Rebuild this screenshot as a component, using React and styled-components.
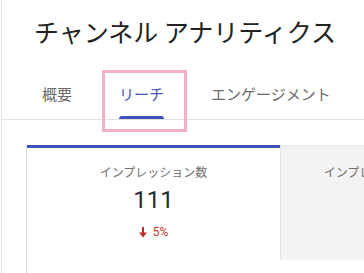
import styled, { createGlobalStyle } from 'styled-components';

const GlobalStyle = createGlobalStyle`
  html, body {
    margin: 0;
    padding: 0;
    background: #fff;
    overflow: hidden;
  }
  body {
    font-family: Roboto, "Noto Sans CJK JP", sans-serif;
  }
`

const Page = styled.div`
  position: relative;
  margin-left: 1px;
  border-left: 1px solid #e3e3e3;
  min-height: 100vh;
  width: 600px;
`

const Title = styled.h1`
  margin: 0;
  padding: 13px 0 0 32px;
  font-family: "Noto Sans CJK JP", sans-serif;
  font-size: 25px;
  line-height: 36px;
  font-weight: 400;
  color: #222;
  white-space: nowrap;
`

const TabBar = styled.div`
  display: flex;
  gap: 41px;
  margin-top: 23px;
  padding-left: 37px;
  border-bottom: 1px solid #e0e0e0;
`

const Tab = styled.div`
  display: flex;
  flex-direction: column;
  padding: 0 3px;
  font-family: "Noto Sans CJK JP", sans-serif;
  font-size: 15px;
  line-height: 44px;
  color: ${p => (p.$active ? '#4a57b5' : '#6b6b6b')};
  white-space: nowrap;

  &::after {
    content: '';
    height: 3px;
    border-radius: 3px 3px 0 0;
    background: ${p => (p.$active ? '#3f51b5' : 'transparent')};
  }
`

const Highlight = styled.div`
  position: absolute;
  left: 100px;
  top: 70px;
  width: 85px;
  height: 62px;
  box-sizing: border-box;
  border: 3px solid #f4b0ca;
  pointer-events: none;
`

const Panel = styled.div`
  margin: 25px 0 0 24px;
  border-left: 1px solid #e0e0e0;
  min-height: 140px;
`

const CardRow = styled.div`
  display: grid;
  grid-template-columns: 253px 254px;
`

const Card = styled.div`
  display: flex;
  flex-direction: column;
  align-items: center;
  height: 115px;
  box-sizing: border-box;
  padding-top: ${p => (p.$active ? '16px' : '18px')};
  background: ${p => (p.$active ? '#fff' : '#f3f3f3')};
  border-top: ${p => (p.$active ? '3px solid #3f51b5' : '1px solid #e6e6e6')};
  border-left: ${p => (p.$active ? 'none' : '1px solid #e6e6e6')};
`

const Label = styled.div`
  font-family: "Noto Sans CJK JP", sans-serif;
  font-size: 12px;
  line-height: 16px;
  color: #6f6f6f;
  white-space: nowrap;
`

const Value = styled.div`
  margin-top: 6px;
  font-family: Roboto, sans-serif;
  font-size: 24px;
  line-height: 28px;
  color: #2a2a2a;
`

const Change = styled.div`
  display: flex;
  align-items: center;
  gap: 6px;
  margin-top: 10px;
  font-family: Roboto, sans-serif;
  font-size: 12px;
  line-height: 16px;
  color: #c0392b;
`

const DownArrow = () => (
  <svg width="8" height="11" viewBox="0 0 8 11">
    <rect x="3" y="0" width="2" height="6.5" fill="#c62828" />
    <polygon points="0,5.5 8,5.5 4,10.5" fill="#c62828" />
  </svg>
)

const metrics = [
  { label: 'インプレッション数', value: '111', change: '5%' },
  { label: 'インプレッションのクリック率', value: '', change: '' },
]

export default function App() {
  return (
    <>
      <GlobalStyle />
      <Page>
        <Title>チャンネル アナリティクス</Title>
        <TabBar>
          <Tab>概要</Tab>
          <Tab $active>リーチ</Tab>
          <Tab>エンゲージメント</Tab>
        </TabBar>
        <Highlight />
        <Panel>
          <CardRow>
            {metrics.map((m, i) => (
              <Card key={m.label} $active={i === 0}>
                <Label>{m.label}</Label>
                {m.value && <Value>{m.value}</Value>}
                {m.change && (
                  <Change>
                    <DownArrow />
                    {m.change}
                  </Change>
                )}
              </Card>
            ))}
          </CardRow>
        </Panel>
      </Page>
    </>
  )
}
